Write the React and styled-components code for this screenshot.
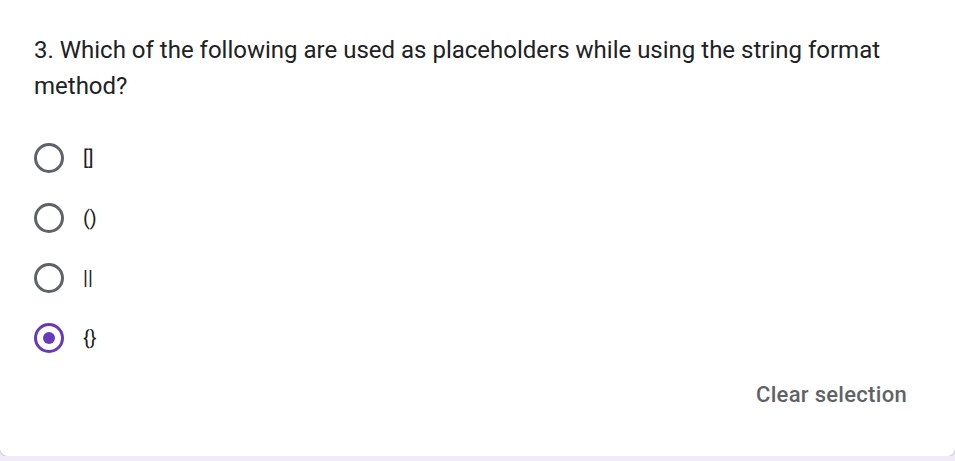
import { useState } from "react";
import styled, { createGlobalStyle } from "styled-components";

const GlobalStyle = createGlobalStyle`
  body {
    margin: 0;
    background: #f0ebf8;
    font-family: Roboto, "Liberation Sans", Arial, sans-serif;
  }
`;

const Card = styled.div`
  box-sizing: border-box;
  width: 955px;
  height: 456px;
  background: #fff;
  border-radius: 0 0 8px 8px;
  box-shadow: 0 1px 2px rgba(60, 64, 67, 0.25);
  padding: 32px 48px 0 34px;
  display: flex;
  flex-direction: column;
`;

const Title = styled.div`
  font-size: 24px;
  line-height: 36px;
  color: #202124;
`;

const Options = styled.div`
  margin-top: 24px;
  display: flex;
  flex-direction: column;
`;

const Row = styled.label`
  height: 60px;
  display: flex;
  align-items: center;
  gap: 19px;
  cursor: pointer;
`;

const Radio = styled.span`
  box-sizing: border-box;
  width: 30px;
  height: 30px;
  border-radius: 50%;
  border: 3px solid ${(props) => (props.checked ? "#673ab7" : "#5f6368")};
  display: flex;
  align-items: center;
  justify-content: center;
  &::after {
    content: "";
    width: 12px;
    height: 12px;
    border-radius: 50%;
    background: #673ab7;
    display: ${(props) => (props.checked ? "block" : "none")};
  }
`;

const Label = styled.span`
  font-size: 20px;
  color: #202124;
`;

const Footer = styled.div`
  margin-top: 12px;
  display: flex;
  justify-content: flex-end;
`;

const ClearButton = styled.button`
  border: none;
  background: none;
  padding: 0;
  font-family: Roboto, "Liberation Sans", sans-serif;
  font-weight: 500;
  font-size: 22px;
  line-height: 30px;
  letter-spacing: 0.3px;
  color: #5f6368;
  cursor: pointer;
`;

const options = ["[]", "()", "||", "{}"];

export default function App() {
  const [selected, setSelected] = useState(3);

  return (
    <>
      <GlobalStyle />
      <Card>
        <Title>
          3. Which of the following are used as placeholders while using the
          string format method?
        </Title>
        <Options>
          {options.map((opt, i) => (
            <Row key={opt} onClick={() => setSelected(i)}>
              <Radio checked={selected === i} />
              <Label>{opt}</Label>
            </Row>
          ))}
        </Options>
        <Footer>
          <ClearButton onClick={() => setSelected(null)}>
            Clear selection
          </ClearButton>
        </Footer>
      </Card>
    </>
  );
}
